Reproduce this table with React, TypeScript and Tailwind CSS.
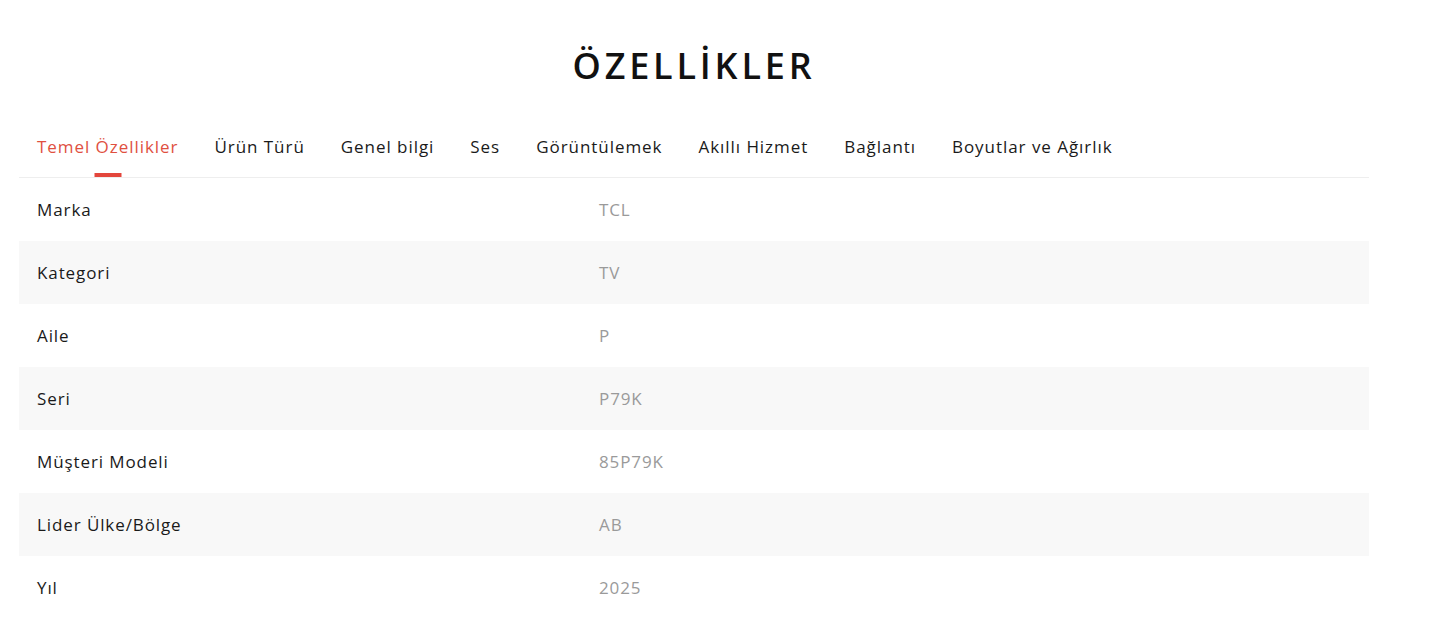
import React from 'react';

const tabs = [
  'Temel Özellikler',
  'Ürün Türü',
  'Genel bilgi',
  'Ses',
  'Görüntülemek',
  'Akıllı Hizmet',
  'Bağlantı',
  'Boyutlar ve Ağırlık',
];

const specs: [string, string][] = [
  ['Marka', 'TCL'],
  ['Kategori', 'TV'],
  ['Aile', 'P'],
  ['Seri', 'P79K'],
  ['Müşteri Modeli', '85P79K'],
  ['Lider Ülke/Bölge', 'AB'],
  ['Yıl', '2025'],
];

export default function App() {
  return (
    <div className="min-h-screen bg-white font-['Open_Sans',sans-serif] text-[#1a1a1a]">
      <div className="w-[1350px] ml-[19px]">
        <h1 className="pt-[43px] text-center text-[36px] leading-[46px] font-semibold tracking-[3.8px] text-[#111]">
          ÖZELLİKLER
        </h1>

        <div className="mt-[26px] flex border-b border-[#eeeeee]">
          {tabs.map((t, i) => (
            <button
              key={t}
              className={`relative px-[18px] h-[62px] pt-[2px] text-[17px] tracking-[0.95px] ${
                i === 0 ? 'text-[#e0503f]' : 'text-[#1a1a1a]'
              }`}
            >
              {t}
              {i === 0 && (
                <span className="absolute left-1/2 -translate-x-1/2 bottom-0 h-[4px] w-[27px] bg-[#e3463c]" />
              )}
            </button>
          ))}
        </div>

        <div>
          {specs.map(([k, v], i) => (
            <div
              key={k}
              className={`grid grid-cols-[562px_1fr] h-[63px] items-center text-[17px] tracking-[0.9px] ${
                i % 2 === 1 ? 'bg-[#f8f8f8]' : 'bg-white'
              }`}
            >
              <span className="pl-[18px] text-[#1a1a1a]">{k}</span>
              <span className="pl-[18px] text-[#9a9a9a]">{v}</span>
            </div>
          ))}
        </div>
      </div>
    </div>
  );
}
